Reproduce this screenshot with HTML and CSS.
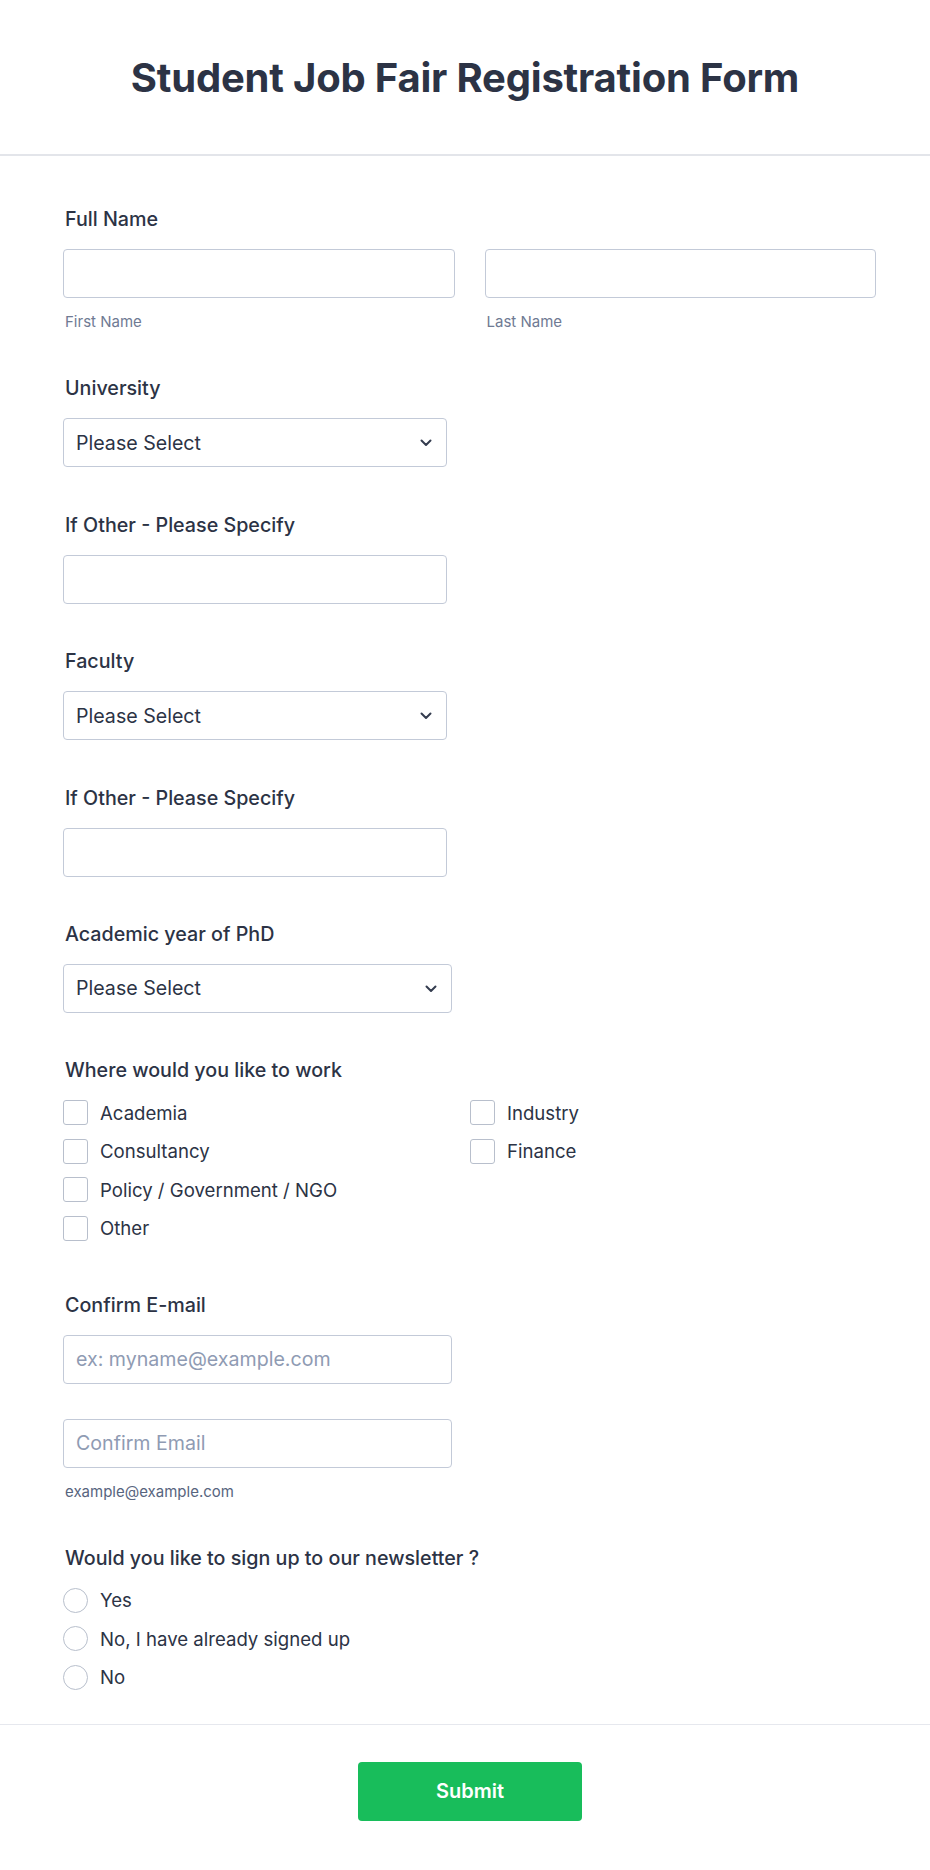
FILE: index.html
```html
<!DOCTYPE html>
<html lang="en">
<head>
    <meta charset="UTF-8">
    <meta name="viewport" content="width=device-width, initial-scale=1.0">
    <title>Student Job Fair Registration Form</title>
    <link rel="stylesheet" href="styles.css">
</head>
<body>
    <div class="form-header">
        <h1>Student Job Fair Registration Form</h1>
    </div>
    <form id="jobFairForm" class="form-body">
        <div class="form-line">
            <label class="form-label">Full Name</label>
            <div class="name-row">
                <div class="name-part">
                    <input type="text" id="firstName" name="firstName">
                    <span class="sub-label">First Name</span>
                </div>
                <div class="name-part">
                    <input type="text" id="lastName" name="lastName">
                    <span class="sub-label">Last Name</span>
                </div>
            </div>
        </div>

        <div class="form-line">
            <label class="form-label" for="university">University</label>
            <div class="select-wrap">
                <select id="university" name="university">
                    <option>Please Select</option>
                </select>
                <svg class="chevron" width="12" height="8" viewBox="0 0 12 8"><path d="M1.5 1.5 6 6l4.5-4.5" fill="none" stroke="#343c4f" stroke-width="2" stroke-linecap="round" stroke-linejoin="round"/></svg>
            </div>
        </div>

        <div class="form-line">
            <label class="form-label" for="uniOther">If Other - Please Specify</label>
            <input type="text" class="short" id="uniOther" name="uniOther">
        </div>

        <div class="form-line">
            <label class="form-label" for="faculty">Faculty</label>
            <div class="select-wrap">
                <select id="faculty" name="faculty">
                    <option>Please Select</option>
                </select>
                <svg class="chevron" width="12" height="8" viewBox="0 0 12 8"><path d="M1.5 1.5 6 6l4.5-4.5" fill="none" stroke="#343c4f" stroke-width="2" stroke-linecap="round" stroke-linejoin="round"/></svg>
            </div>
        </div>

        <div class="form-line">
            <label class="form-label" for="facultyOther">If Other - Please Specify</label>
            <input type="text" class="short" id="facultyOther" name="facultyOther">
        </div>

        <div class="form-line">
            <label class="form-label" for="year">Academic year of PhD</label>
            <div class="select-wrap wide">
                <select id="year" name="year">
                    <option>Please Select</option>
                </select>
                <svg class="chevron" width="12" height="8" viewBox="0 0 12 8"><path d="M1.5 1.5 6 6l4.5-4.5" fill="none" stroke="#343c4f" stroke-width="2" stroke-linecap="round" stroke-linejoin="round"/></svg>
            </div>
        </div>

        <div class="form-line">
            <label class="form-label">Where would you like to work</label>
            <div class="option-cols">
                <div class="option-col">
                    <label class="option"><span class="box"></span>Academia</label>
                    <label class="option"><span class="box"></span>Consultancy</label>
                    <label class="option"><span class="box"></span>Policy / Government / NGO</label>
                    <label class="option"><span class="box"></span>Other</label>
                </div>
                <div class="option-col">
                    <label class="option"><span class="box"></span>Industry</label>
                    <label class="option"><span class="box"></span>Finance</label>
                </div>
            </div>
        </div>

        <div class="form-line">
            <label class="form-label" for="email">Confirm E-mail</label>
            <input type="email" class="wide" id="email" name="email" placeholder="ex: myname@example.com">
            <input type="email" class="wide confirm" id="emailConfirm" name="emailConfirm" placeholder="Confirm Email">
            <span class="sub-label dark">example@example.com</span>
        </div>

        <div class="form-line last">
            <label class="form-label">Would you like to sign up to our newsletter ?</label>
            <div class="radio-list">
                <label class="option"><span class="circle"></span>Yes</label>
                <label class="option"><span class="circle"></span>No, I have already signed up</label>
                <label class="option"><span class="circle"></span>No</label>
            </div>
        </div>
    </form>
    <div class="form-footer">
        <button type="submit" form="jobFairForm">Submit</button>
    </div>
</body>
</html>
```

FILE: styles.css
```css
body {
    margin: 0;
    font-family: Inter, "Noto Sans", sans-serif;
    color: #2c3345;
    background: #fff;
}
.form-header {
    height: 154px;
    display: flex;
    align-items: center;
    justify-content: center;
    border-bottom: 2px solid #e3e5ea;
}
.form-header h1 {
    margin: 0;
    font-size: 40px;
    font-weight: 700;
    color: #2c3345;
    letter-spacing: -0.2px;
}
.form-body {
    width: 813px;
    padding: 51px 0 0 63px;
}
.form-line {
    margin-bottom: 45.4px;
}
.form-line.last {
    margin-bottom: 27px;
}
.form-label {
    display: block;
    font-size: 19.7px;
    font-weight: 500;
    line-height: 24px;
    margin-bottom: 18px;
    padding-left: 2px;
}
input[type="text"],
input[type="email"],
select {
    box-sizing: border-box;
    height: 49px;
    border: 1px solid #c3cad8;
    border-radius: 4px;
    background: #fff;
    font-family: inherit;
    font-size: 19.6px;
    color: #2c3345;
    padding: 0 12px;
    outline: none;
}
input::placeholder {
    color: #8f9bb3;
}
.name-row {
    display: flex;
    gap: 30px;
}
.name-part {
    flex: 1;
}
.name-part input {
    width: 100%;
}
.sub-label {
    display: block;
    margin-top: 15px;
    font-size: 15px;
    line-height: 18px;
    color: #6f7a93;
    padding-left: 2px;
}
.sub-label.dark {
    color: #57647e;
}
.short {
    width: 384px;
}
.wide {
    width: 389px;
    display: block;
}
.confirm {
    margin-top: 35px;
}
.select-wrap {
    position: relative;
    width: 384px;
}
.select-wrap.wide {
    width: 389px;
}
.select-wrap select {
    width: 100%;
    appearance: none;
    -webkit-appearance: none;
}
.chevron {
    position: absolute;
    right: 15px;
    top: 21px;
    pointer-events: none;
}
.option-cols {
    display: grid;
    grid-template-columns: 407px 1fr;
    margin-top: -7px;
}
.option {
    display: flex;
    align-items: center;
    height: 38.5px;
    font-size: 18.6px;
    color: #2c3345;
}
.box {
    box-sizing: border-box;
    width: 25px;
    height: 25px;
    border: 1px solid #b8bfcc;
    border-radius: 3px;
    margin-right: 12px;
}
.radio-list {
    margin-top: -7px;
}
.circle {
    box-sizing: border-box;
    width: 25px;
    height: 25px;
    border: 1px solid #b8bfcc;
    border-radius: 50%;
    margin-right: 12px;
}
.form-footer {
    border-top: 1px solid #e6e8ee;
    display: flex;
    justify-content: center;
    padding-top: 37px;
    padding-bottom: 50px;
}
.form-footer button {
    width: 224px;
    height: 59px;
    margin-left: 10px;
    border: none;
    border-radius: 4px;
    background: #18bd5b;
    color: #fff;
    font-family: inherit;
    font-size: 20px;
    font-weight: 600;
    cursor: pointer;
}
```
